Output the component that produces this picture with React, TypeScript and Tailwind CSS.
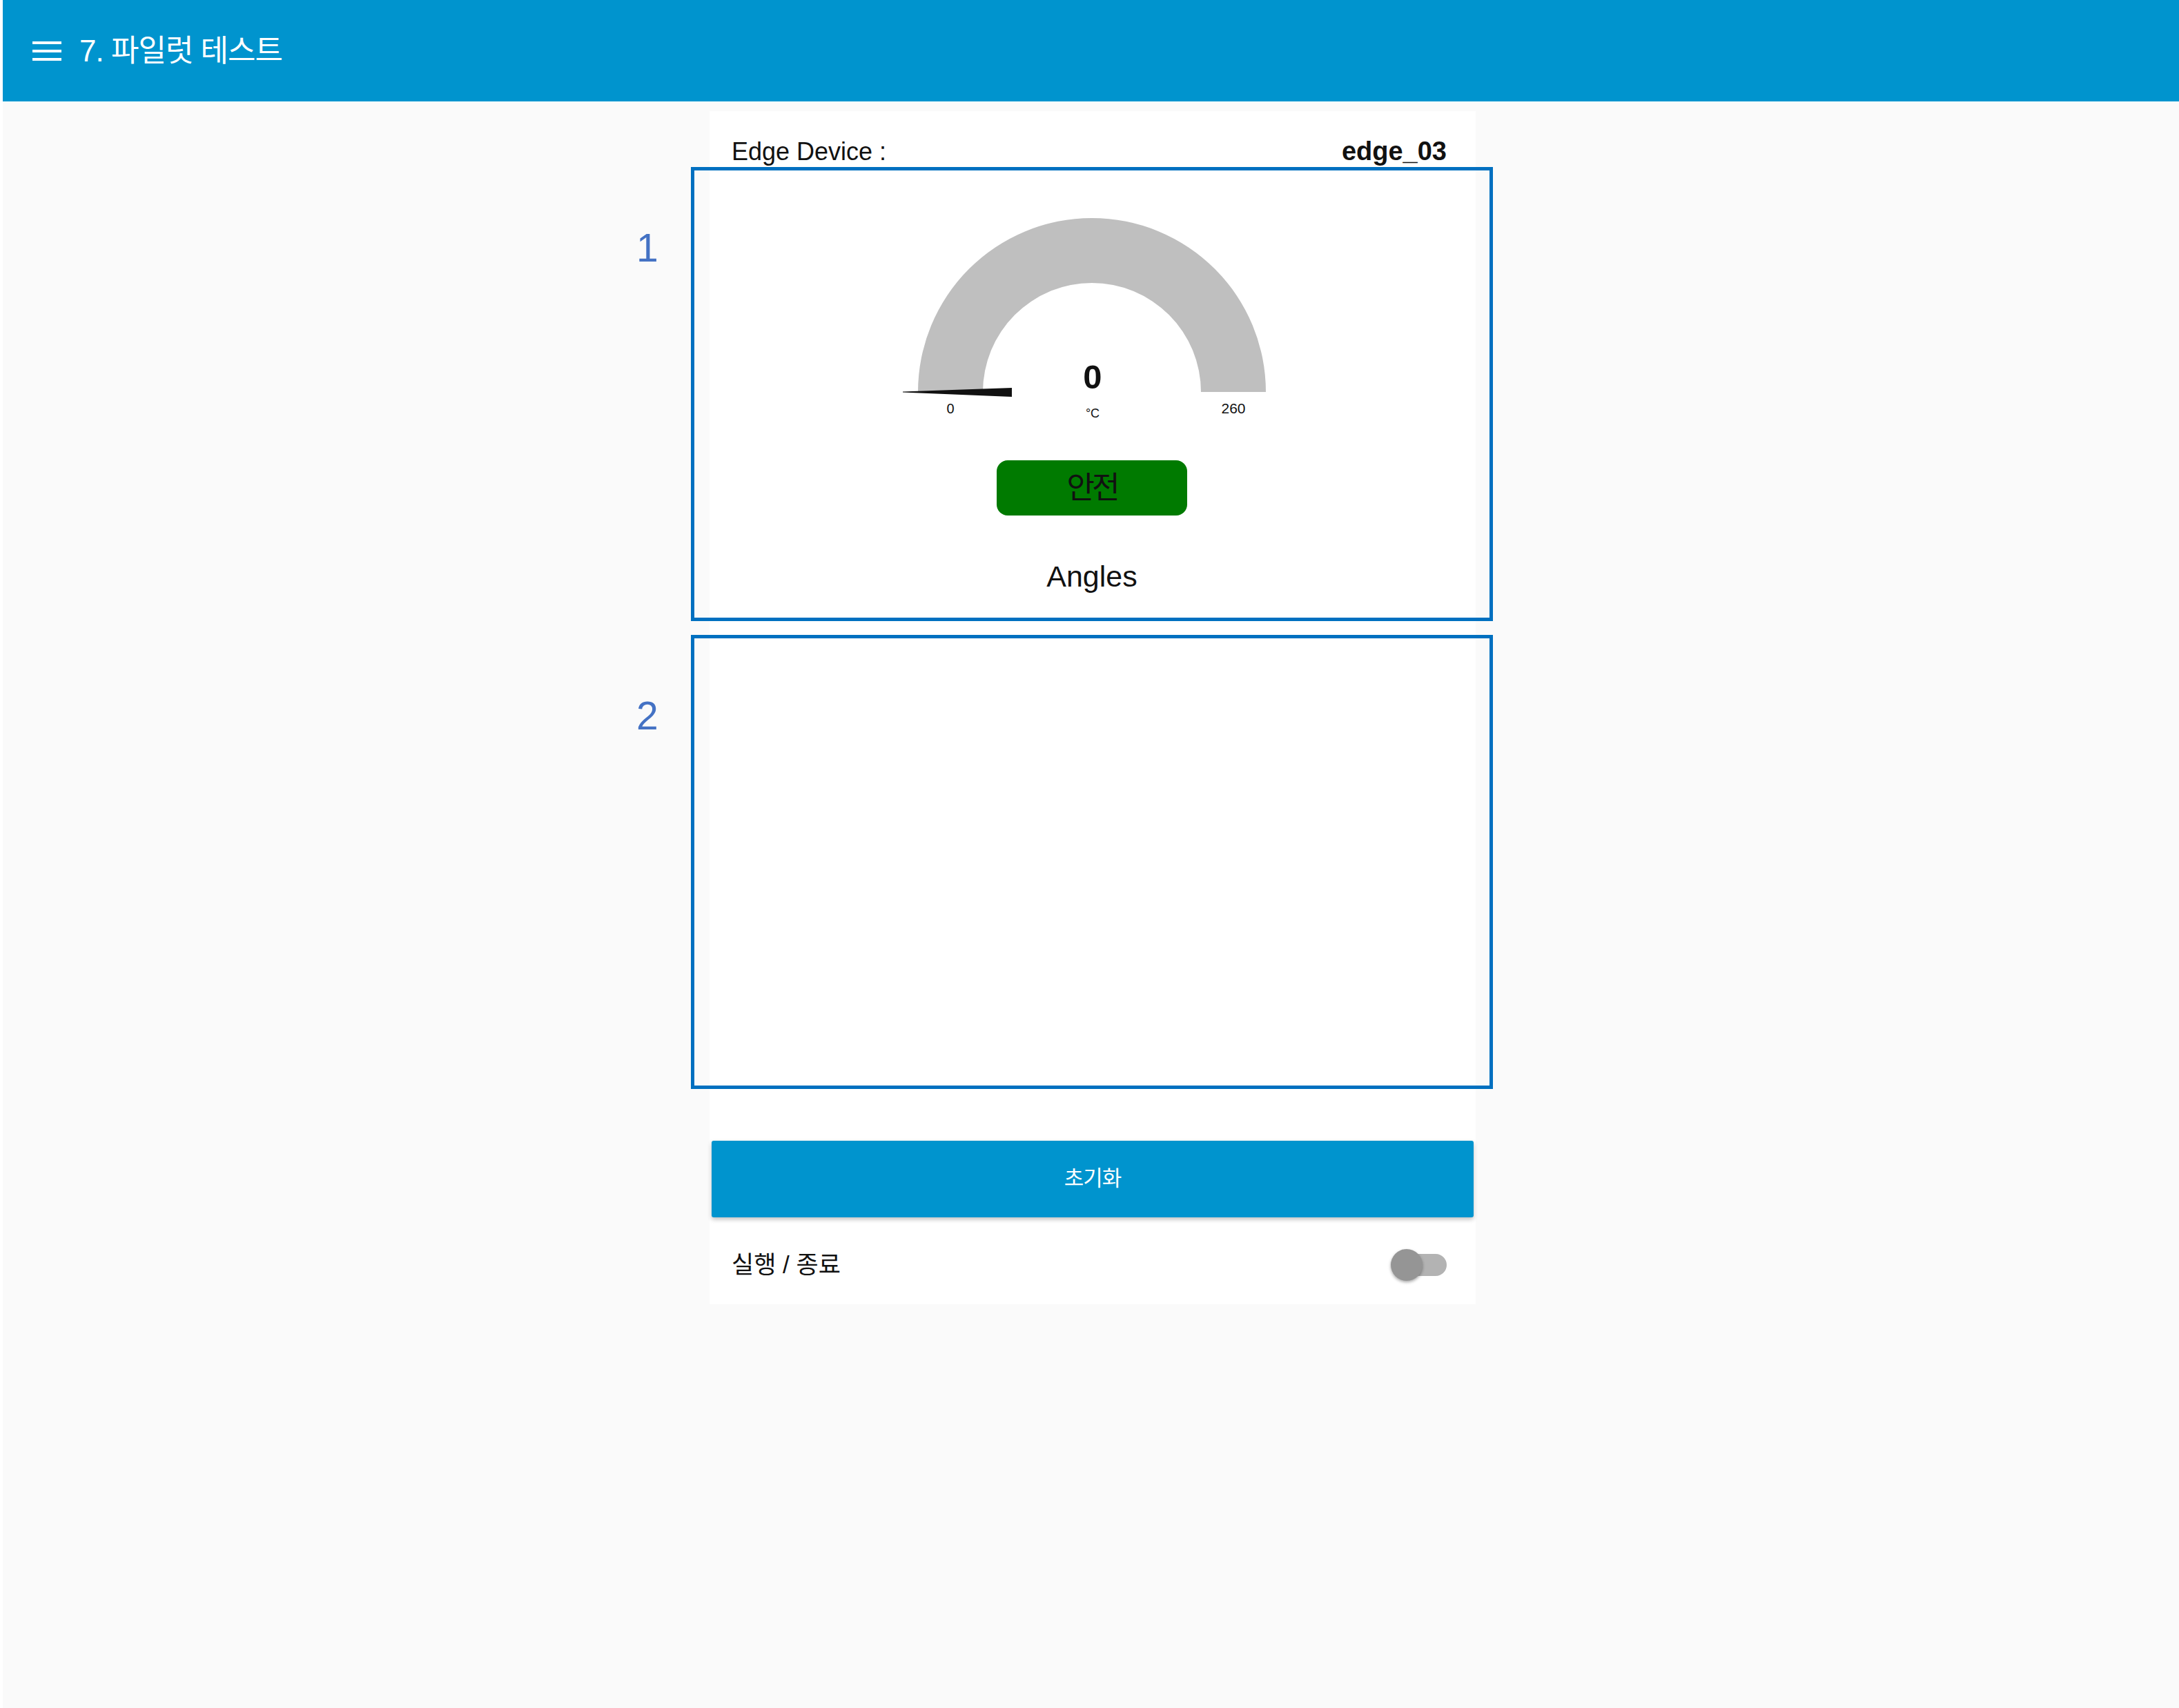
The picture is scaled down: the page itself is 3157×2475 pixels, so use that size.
import React, { useState } from "react";

const Gauge: React.FC<{ value: number; min: number; max: number; unit: string }> = ({ value, min, max, unit }) => {
  return (
    <svg width="560" height="304" viewBox="0 0 560 304" className="block">
      <path d="M 28 260 A 252 252 0 0 1 532 260 L 438 260 A 158 158 0 0 0 122 260 Z" fill="#bfbfbf" />
      {/* needle sits on the minimum */}
      <polygon points="6,259.5 164,254 164,267 6,260.5" fill="#111111" />
      <text x="281" y="255" textAnchor="middle" fontSize="49" fontWeight="700" fill="#111" fontFamily="Liberation Sans, sans-serif">
        {value}
      </text>
      <text x="281" y="297" textAnchor="middle" fontSize="18" fill="#111" fontFamily="Liberation Sans, sans-serif">
        {unit}
      </text>
      <text x="75" y="291" textAnchor="middle" fontSize="20" fill="#111" fontFamily="Liberation Sans, sans-serif">
        {min}
      </text>
      <text x="485" y="291" textAnchor="middle" fontSize="21" fill="#111" fontFamily="Liberation Sans, sans-serif">
        {max}
      </text>
    </svg>
  );
};

export default function App() {
  const [running, setRunning] = useState(false);

  return (
    <div className="min-h-[2475px] bg-white font-['Liberation_Sans','Noto_Sans_CJK_KR',sans-serif]">
      <div className="ml-[4px] min-h-[2475px] bg-[#fafafa]">
        {/* Toolbar */}
        <header className="flex h-[148px] items-center border-b border-white bg-[#0094ce] pl-[43px]">
          <button className="flex w-[42px] flex-col gap-[8px]" aria-label="Menu">
            <span className="h-[4px] w-full bg-white" />
            <span className="h-[4px] w-full bg-white" />
            <span className="h-[4px] w-full bg-white" />
          </button>
          <h1 className="ml-[26px] text-[44px] leading-[50px] tracking-[-1px] text-white">7. 파일럿 테스트</h1>
        </header>

        {/* Group panel */}
        <div className="ml-[1024px] mt-[13px] w-[1110px] bg-white">
          <div className="flex items-baseline justify-between pl-[32px] pr-[42px] pt-[37px] text-[36px] leading-[43px] text-[#111]">
            <span>Edge Device :</span>
            <span className="text-[38px] font-bold">edge_03</span>
          </div>

          <div className="relative -ml-[27px] mt-[1px] flex h-[658px] w-[1162px] flex-col items-center border-[5px] border-[#0070c0]">
            <span className="absolute left-[-84px] top-[84px] text-[57px] leading-none text-[#4472c4]">1</span>
            <div className="mt-[61px]">
              <Gauge value={0} min={0} max={260} unit="°C" />
            </div>
            <div className="mt-[55px] flex h-[80px] w-[276px] items-center justify-center rounded-[16px] bg-[#007a00] text-[44px] leading-none tracking-[-4px] text-[#111]">
              안전
            </div>
            <div className="mt-[63px] text-[43px] leading-[50px] text-[#111]">Angles</div>
          </div>

          <div className="relative -ml-[27px] mt-[20px] h-[658px] w-[1162px] border-[5px] border-[#0070c0]">
            <span className="absolute left-[-84px] top-[84px] text-[57px] leading-none text-[#4472c4]">2</span>
          </div>

          <button className="mx-[3px] mt-[75px] flex h-[111px] w-[1104px] items-center justify-center rounded-[3px] bg-[#0094ce] text-[31px] tracking-[-1px] text-white shadow-[0_3px_6px_rgba(0,0,0,0.25)]">
            초기화
          </button>

          <div className="flex h-[126px] items-center justify-between pl-[32px] pr-[42px] pt-[12px]">
            <span className="text-[35px] text-[#111]">실행 / 종료</span>
            <button
              onClick={() => setRunning(r => !r)}
              className="relative h-[46px] w-[81px]"
              aria-label="Toggle"
            >
              <span className="absolute right-0 top-[7px] h-[32px] w-[56px] rounded-full bg-[#b3b3b3]" />
              <span
                className={`absolute top-0 h-[46px] w-[46px] rounded-full bg-[#959595] shadow-[0_2px_4px_rgba(0,0,0,0.35)] ${running ? "left-[35px]" : "left-0"}`}
              />
            </button>
          </div>
        </div>
      </div>
    </div>
  );
}
